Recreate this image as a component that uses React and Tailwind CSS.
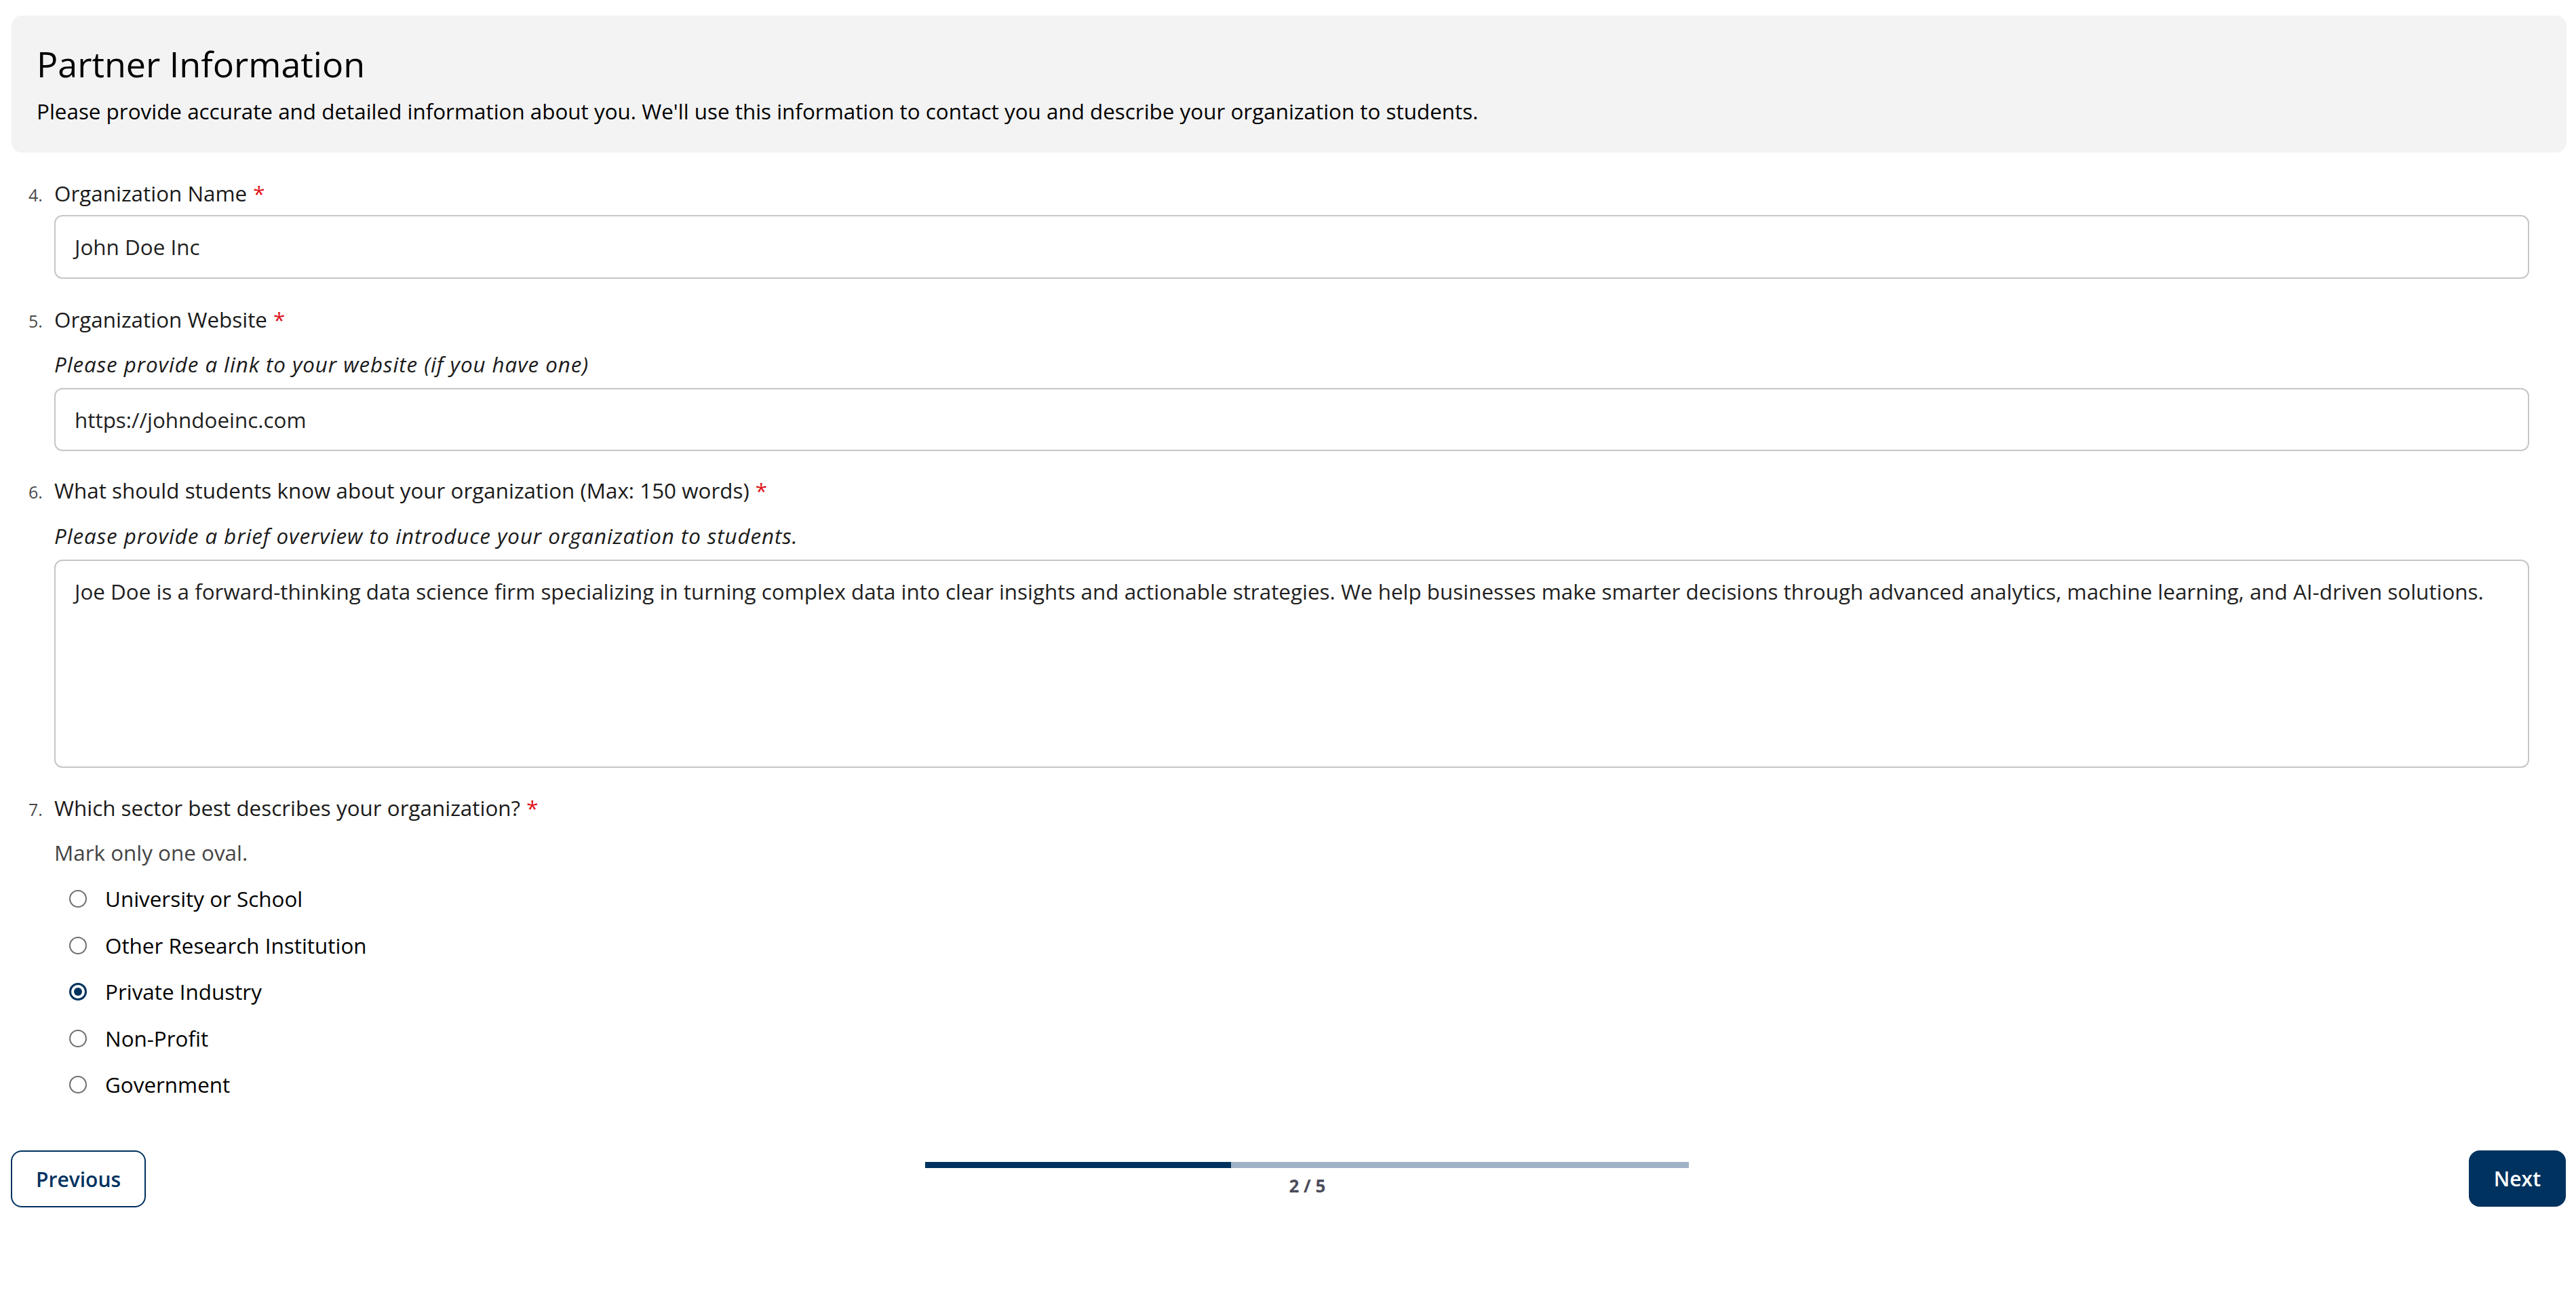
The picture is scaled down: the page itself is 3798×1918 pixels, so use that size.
import React from "react";

const Label = ({ num, children, className = "" }) => (
  <div className={"flex items-baseline h-[40px] leading-[40px] " + className}>
    <span className="w-[38px] shrink-0 text-[25px] text-[#4a4a4a]">{num}.</span>
    <span className="text-[31.4px] text-[#1a1a1a]">
      {children}
      <span className="ml-[9px] text-[#e0131a]">*</span>
    </span>
  </div>
);

const Hint = ({ children, className = "" }) => (
  <div
    className={
      "pl-[38px] h-[40px] leading-[40px] text-[31.4px] tracking-[0.9px] italic text-[#1a1a1a] " + className
    }
  >
    {children}
  </div>
);

const TextBox = ({ value, className = "" }) => (
  <div className="pl-[38px]">
    <div
      className={
        "flex items-center rounded-[12px] border-2 border-[#c6c6c6] bg-white pl-[28px] text-[31.4px] text-[#1f1f1f] " +
        className
      }
    >
      {value}
    </div>
  </div>
);

const sectors = [
  "University or School",
  "Other Research Institution",
  "Private Industry",
  "Non-Profit",
  "Government",
];

const Radio = ({ label, checked }) => (
  <div className="flex items-center h-[68.5px]">
    {checked ? (
      <span className="flex h-[26px] w-[26px] items-center justify-center rounded-full border-[3px] border-[#00325f]">
        <span className="h-[12px] w-[12px] rounded-full bg-[#00325f]" />
      </span>
    ) : (
      <span className="h-[26px] w-[26px] rounded-full border-2 border-[#707070]" />
    )}
    <span className="ml-[27px] text-[31.4px] leading-[40px] text-black">{label}</span>
  </div>
);

export default function App() {
  return (
    <div className="min-h-screen bg-white pl-[16px] pr-[15px] font-['Open_Sans',sans-serif]">
      <div className="mt-[23px] inline-block w-full pt-[41px] pb-[41px] pl-[37px] rounded-[15px] bg-[#f3f3f3] ml-[1px]">
        <h1 className="h-[60px] text-[52px] leading-[60px] text-black">Partner Information</h1>
        <p className="mt-[20px] h-[40px] text-[31.4px] leading-[40px] text-black">
          Please provide accurate and detailed information about you. We'll use this information to contact you and
          describe your organization to students.
        </p>
      </div>

      <div className="pl-[26px] pr-[54px]">
        <Label num={4} className="mt-[40px]">Organization Name</Label>
        <div className="mt-[12px]">
          <TextBox value="John Doe Inc" className="h-[94px]" />
        </div>

        <Label num={5} className="mt-[40px]">Organization Website</Label>
        <Hint className="mt-[26px]">Please provide a link to your website (if you have one)</Hint>
        <div className="mt-[15px]">
          <TextBox value="https://johndoeinc.com" className="h-[93px]" />
        </div>

        <Label num={6} className="mt-[38px]">What should students know about your organization (Max: 150 words)</Label>
        <Hint className="mt-[27px]">Please provide a brief overview to introduce your organization to students.</Hint>
        <div className="mt-[15px] pl-[38px]">
          <div className="h-[307px] rounded-[12px] border-2 border-[#c6c6c6] bg-white pl-[28px] pt-[25px] pr-[20px] text-[31.4px] leading-[40px] text-[#1f1f1f]">
            Joe Doe is a forward-thinking data science firm specializing in turning complex data into clear insights and
            actionable strategies. We help businesses make smarter decisions through advanced analytics, machine learning,
            and AI-driven solutions.
          </div>
        </div>

        <Label num={7} className="mt-[39px]">Which sector best describes your organization?</Label>
        <div className="mt-[26px] pl-[38px] h-[40px] text-[31.4px] leading-[40px] text-[#444444]">Mark only one oval.</div>
        <div className="mt-[13.75px] pl-[60px]">
          {sectors.map((s) => (
            <Radio key={s} label={s} checked={s === "Private Industry"} />
          ))}
        </div>
      </div>

      <div className="mt-[63px] flex items-start">
        <button className="flex h-[84px] items-center rounded-[16px] border-2 border-[#00325f] bg-white px-[35px] text-[30px] font-semibold text-[#00325f]">
          Previous
        </button>
        <div className="flex flex-1 justify-center pt-[17px]">
          <div className="w-[1126px]">
            <div className="flex h-[9px] w-full bg-[#9fb2c5]">
              <div className="h-full w-2/5 bg-[#00325f]" />
            </div>
            <div className="mt-[8px] text-center text-[26px] font-bold leading-[36px] text-[#4b4b5a]">2 / 5</div>
          </div>
        </div>
        <button className="flex h-[83px] items-center rounded-[16px] bg-[#00325f] px-[37px] text-[30px] font-semibold text-white">
          Next
        </button>
      </div>
    </div>
  );
}
